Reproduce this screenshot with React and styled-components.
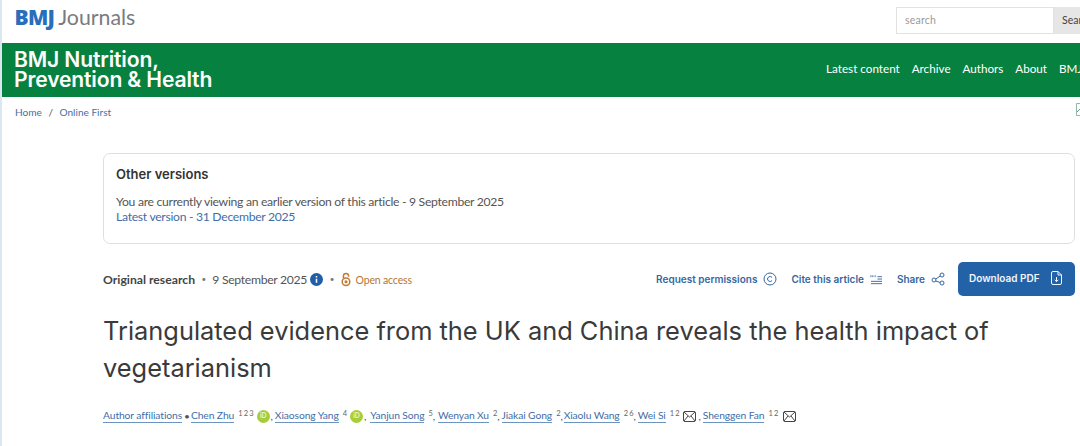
import React from 'react';
import styled, { createGlobalStyle } from 'styled-components';

const Global = createGlobalStyle`
  html, body { margin: 0; padding: 0; background: #fff; width: 1080px; height: 446px; overflow: hidden; }
  body { font-family: Lato, "Liberation Sans", sans-serif; color: #333; }
`;
const Page = styled.div`
  width: 1080px; height: 446px; overflow: hidden; display: flex; flex-direction: column;
  border-left: 2px solid #dbe8f1; box-sizing: border-box;
`;
const TopBar = styled.header`
  height: 42px; flex: none; display: flex; align-items: center; justify-content: space-between;
  padding: 0 0 0 12.5px;
`;
const Logo = styled.div`
  display: flex; align-items: baseline; height: 32px; line-height: 32px; margin-top: -8px;
`;
const LogoBmj = styled.span`
  font-family: "Open Sans", sans-serif; font-weight: 800; color: #2a6ebb; font-size: 21px; letter-spacing: -.7px;
`;
const LogoJournals = styled.span`
  font-family: Lato, sans-serif; font-weight: 400; color: #777c80; margin-left: 4px; font-size: 21.3px;
`;
const SearchBox = styled.div`
  display: flex; height: 27px; width: 184px; margin-top: -2px; flex: none;
`;
const SearchInput = styled.div`
  width: 158px; flex: none; box-sizing: border-box; border: 1px solid #e2e2e2; font-size: 10.5px; color: #9a9a9a;
  line-height: 25px; padding-left: 8px; letter-spacing: .2px;
`;
const SearchButton = styled.div`
  flex: 1; min-width: 0; background: #e6e6e6; font-size: 10.5px; line-height: 26px; color: #444; padding-left: 8px; white-space: nowrap;
`;
const GreenBand = styled.div`
  height: 54px; flex: none; margin-top: 1px; background: #06813f; display: flex; align-items: center; justify-content: space-between;
  padding-left: 12px; color: #fff; overflow: hidden;
`;
const JournalName = styled.div`
  font-family: Inter, sans-serif; font-weight: 600; font-size: 21.1px; line-height: 20px; margin-top: -1px; letter-spacing: -.15px;
`;
const Nav = styled.nav`
  display: flex; gap: 11.9px; font-size: 11.7px; white-space: nowrap; flex: none; width: 254px; margin-top: -4px;
`;
const Breadcrumb = styled.div`
  height: 30px; padding-bottom: 2px; flex: none; display: flex; align-items: center; justify-content: flex-start; padding-left: 13px; font-size: 10.1px;
  color: #4a6ea5; gap: 5.5px; position: relative;
`;
const Slash = styled.span` color: #555; margin: 0 1px; `;
const BrokenImg = styled.svg` position: absolute; right: 0; top: 6px; `;
const Main = styled.main`
  margin-left: 101px; width: 972px; display: flex; flex-direction: column; padding-top: 24px;
`;
const VersionCard = styled.section`
  height: 91px; box-sizing: border-box; border: 1px solid #dfdfdf; border-radius: 7px; padding: 12px 12px;
`;
const CardTitle = styled.h2`
  margin: 0 0 12px; font-family: Inter, sans-serif; font-weight: 600; font-size: 13px; line-height: 16px; color: #333;
`;
const CardLine = styled.div`
  font-size: 12.2px; line-height: 15px; letter-spacing: -.3px; color: ${p => (p.$link ? '#3f6ea8' : '#555')};
`;
const MetaRow = styled.div`
  display: flex; align-items: center; justify-content: space-between; margin-top: 17px; height: 36px;
`;
const MetaLeft = styled.div`
  display: flex; align-items: center; font-size: 12.2px; color: #555; letter-spacing: -.3px;
`;
const Kind = styled.strong` font-weight: 700; color: #444; letter-spacing: 0; `;
const Dot = styled.span` margin: 0 6.5px; color: #777; font-size: 8px; `;
const OpenAccess = styled.span` color: #b5763a; font-size: 10.5px; margin: 1px 0 0 5px; letter-spacing: -.15px; `;
const Actions = styled.div`
  display: flex; align-items: center; font-family: Inter, sans-serif; font-size: 10px; font-weight: 600; color: #3567a3; white-space: nowrap;
`;
const Action = styled.span`
  display: flex; align-items: center; gap: 6px; margin-right: ${p => p.$gap ?? 14}px;
`;
const PdfButton = styled.div`
  width: 117px; height: 34px; background: #2462a8; border-radius: 5px; color: #f2f6fa; display: flex; align-items: center;
  justify-content: flex-start; padding: 0 0 3px 11px; box-sizing: border-box; gap: 11px; font-size: 10px; font-weight: 600;
`;
const Title = styled.h1`
  margin: 15px 0 0; font-family: Inter, sans-serif; font-weight: 400; font-size: 25.4px; line-height: 37px; color: #3a3a3a; width: 900px;
`;
const Authors = styled.div`
  margin-top: 22px; font-size: 10.3px; letter-spacing: -.1px; line-height: 16px; color: #555; display: flex; align-items: center; white-space: nowrap;
`;
const AuthorLink = styled.a`
  color: #3f6ea8; border-bottom: 1px solid #6d93bf; line-height: 13px;
`;
const Sup = styled.sup`
  font-size: 7.5px; line-height: 0; color: #666; margin: 0 2px 0 4px; position: relative; top: -2px; vertical-align: baseline; word-spacing: -.5px;
`;
const Orcid = styled.span`
  width: 13px; height: 13px; border-radius: 50%; background: #a6ce39; color: #eaf3cd; font-size: 6.5px; font-weight: 700;
  display: inline-flex; align-items: center; justify-content: center; flex: none; margin-left: 1px;
`;
const Sep = styled.span` margin: 0 ${p => p.$r ?? 2}px 0 ${p => p.$l ?? 2}px; `;
const Mail = styled.svg` flex: none; margin-left: ${p => p.$l ?? 1}px; `;

const MailIcon = ({ left }) => (
  <Mail $l={left} width="13" height="11" viewBox="0 0 13 11" fill="none" stroke="#444" strokeWidth="1">
    <rect x=".5" y=".5" width="12" height="10" rx="1.5" />
    <path d="M1 1l5.5 5L12 1M1 10l4-5M12 10L8 5" />
  </Mail>
);
const Author = ({ name, sup }) => (
  <>
    <AuthorLink>{name}</AuthorLink>
    {sup && <Sup>{sup}</Sup>}
  </>
);

export default function App() {
  return (
    <Page>
      <Global />
      <TopBar>
        <Logo><LogoBmj>BMJ</LogoBmj><LogoJournals>Journals</LogoJournals></Logo>
        <SearchBox>
          <SearchInput>search</SearchInput>
          <SearchButton>Search</SearchButton>
        </SearchBox>
      </TopBar>
      <GreenBand>
        <JournalName>BMJ Nutrition,<br />Prevention &amp; Health</JournalName>
        <Nav><span>Latest content</span><span>Archive</span><span>Authors</span><span>About</span><span>BMJ</span></Nav>
      </GreenBand>
      <Breadcrumb>
        <span>Home</span><Slash>/</Slash><span>Online First</span>
        <BrokenImg width="4" height="13" viewBox="0 0 4 13" fill="none"><path d="M4 .5H.5v12H4" stroke="#8fb6a8" /><path d="M1 9l3-3" stroke="#5ea77c" /></BrokenImg>
      </Breadcrumb>
      <Main>
        <VersionCard>
          <CardTitle>Other versions</CardTitle>
          <CardLine>You are currently viewing an earlier version of this article - 9 September 2025</CardLine>
          <CardLine $link>Latest version - 31 December 2025</CardLine>
        </VersionCard>
        <MetaRow>
          <MetaLeft>
            <Kind>Original research</Kind><Dot>•</Dot>9 September 2025
            <svg width="13" height="13" viewBox="0 0 13 13" style={{ marginLeft: 3 }}><circle cx="6.5" cy="6.5" r="6.5" fill="#1f5fa8" /><path d="M6.5 3v1.4M6.500 5.800v4" stroke="#fff" strokeWidth="1.5" /></svg>
            <Dot>•</Dot>
            <svg width="10" height="15" viewBox="0 0 10 15" fill="none" stroke="#c17a35" strokeWidth="1.5"><circle cx="5" cy="9.7" r="3.8" /><path d="M2.4 6V4a2.6 2.6 0 0 1 5.2 0v.8" /><circle cx="5" cy="9.7" r=".8" /></svg>
            <OpenAccess>Open access</OpenAccess>
          </MetaLeft>
          <Actions>
            <Action>Request permissions
              <svg width="14" height="14" viewBox="0 0 14 14" fill="none" stroke="#3567a3"><circle cx="7" cy="7" r="6" /><path d="M9 5.400a2.500 2.500 0 1 0 0 3.200" /></svg>
            </Action>
            <Action>Cite this article
              <svg width="13" height="11" viewBox="0 0 14 11" fill="none" stroke="#3567a3"><path d="M1 3V1M3 3V1M5.500 3V1M8 2.500h5M8 5h5M1 7.500h12M1 10h12" /></svg>
            </Action>
            <Action $gap={13}>Share
              <svg width="14" height="14" viewBox="0 0 14 14" fill="none" stroke="#3567a3"><circle cx="3" cy="8" r="2" /><circle cx="11" cy="3" r="2" /><circle cx="11" cy="11" r="2" /><path d="M4.700 7l4.600-3M4.700 9l4.600 1.500" /></svg>
            </Action>
            <PdfButton>Download PDF
              <svg width="11" height="14" viewBox="0 0 11 14" fill="none" stroke="#f2f6fa"><path d="M7 .5H2A1.500 1.500 0 0 0 .5 2v10A1.500 1.500 0 0 0 2 13.500h7a1.500 1.500 0 0 0 1.500-1.500V4zM7 .5V4h3.500M5.500 6v4.500M3.700 8.800l1.800 1.800 1.800-1.800" /></svg>
            </PdfButton>
          </Actions>
        </MetaRow>
        <Title>Triangulated evidence from the UK and China reveals the health impact of vegetarianism</Title>
        <Authors>
          <AuthorLink>Author affiliations</AuthorLink><Sep $r={1}>•</Sep>
          <Author name="Chen Zhu" sup="1 2 3" /><Orcid>iD</Orcid><Sep $l={1}>,</Sep>
          <Author name="Xiaosong Yang" sup="4" /><Orcid>iD</Orcid><Sep $l={1} $r={4}>,</Sep>
          <Author name="Yanjun Song" sup="5" /><Sep $l={-2} $r={3}>,</Sep>
          <Author name="Wenyan Xu" sup="2" /><Sep $l={-2} $r={2}>,</Sep>
          <Author name="Jiakai Gong" sup="2" /><Sep $l={-2} $r={1}>,</Sep>
          <Author name="Xiaolu Wang" sup="2 6" /><Sep $l={-2} $r={2}>,</Sep>
          <Author name="Wei Si" sup="1 2" /><MailIcon /><Sep $l={3} $r={2}>,</Sep>
          <Author name="Shenggen Fan" sup="1 2" /><MailIcon left={3} />
        </Authors>
      </Main>
    </Page>
  );
}
